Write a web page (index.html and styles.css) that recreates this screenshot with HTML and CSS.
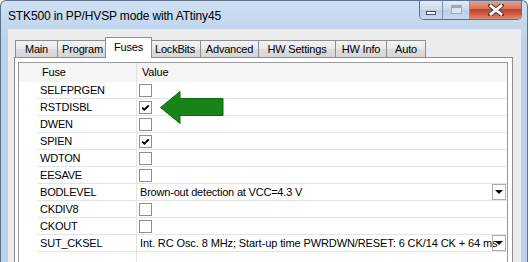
FILE: index.html
```html
<!DOCTYPE html>
<html lang="en">
<head>
  <meta charset="UTF-8">
  <meta name="viewport" content="width=device-width, initial-scale=1.0">
  <title>STK500 in PP/HVSP mode with ATtiny45</title>
  <link rel="stylesheet" href="styles.css">
</head>
<body>
  <div class="window">
    <div class="titlebar">
      <span class="title">STK500 in PP/HVSP mode with ATtiny45</span>
      <div class="caption-buttons">
        <div class="cap-btn cap-min"><span class="min-glyph"></span></div>
        <div class="cap-btn cap-max"><span class="max-glyph"></span></div>
        <div class="cap-btn cap-close">
          <svg width="16" height="12" viewBox="0 0 16 12">
            <path d="M2.5 1.5 L13.5 10.5 M13.5 1.5 L2.5 10.5" stroke="#4a3a36" stroke-width="4.6" stroke-linecap="square"/>
            <path d="M3 2 L13 10 M13 2 L3 10" stroke="#fff" stroke-width="2.8" stroke-linecap="square"/>
          </svg>
        </div>
      </div>
    </div>

    <div class="frame">
      <div class="client">
        <div class="tabs">
          <div class="tab tab-main">Main</div>
          <div class="tab tab-program">Program</div>
          <div class="tab tab-fuses selected">Fuses</div>
          <div class="tab tab-lockbits">LockBits</div>
          <div class="tab tab-advanced">Advanced</div>
          <div class="tab tab-hwsettings">HW Settings</div>
          <div class="tab tab-hwinfo">HW Info</div>
          <div class="tab tab-auto">Auto</div>
        </div>

        <div class="panel">
          <div class="grid">
            <div class="grid-header">
              <div class="rowhead"></div>
              <div class="cell name">Fuse</div>
              <div class="cell value">Value</div>
            </div>

            <div class="grid-row">
              <div class="rowhead"></div>
              <div class="cell name">SELFPRGEN</div>
              <div class="cell value"><span class="checkbox"></span></div>
            </div>
            <div class="grid-row">
              <div class="rowhead"></div>
              <div class="cell name">RSTDISBL</div>
              <div class="cell value"><span class="checkbox checked"><svg width="11" height="11" viewBox="0 0 11 11"><path d="M2.2 5.6 L4.4 7.7 L8.8 3.3" stroke="#000" stroke-width="1.9" fill="none"/></svg></span></div>
            </div>
            <div class="grid-row">
              <div class="rowhead"></div>
              <div class="cell name">DWEN</div>
              <div class="cell value"><span class="checkbox"></span></div>
            </div>
            <div class="grid-row">
              <div class="rowhead"></div>
              <div class="cell name">SPIEN</div>
              <div class="cell value"><span class="checkbox checked"><svg width="11" height="11" viewBox="0 0 11 11"><path d="M2.2 5.6 L4.4 7.7 L8.8 3.3" stroke="#000" stroke-width="1.9" fill="none"/></svg></span></div>
            </div>
            <div class="grid-row">
              <div class="rowhead"></div>
              <div class="cell name">WDTON</div>
              <div class="cell value"><span class="checkbox"></span></div>
            </div>
            <div class="grid-row">
              <div class="rowhead"></div>
              <div class="cell name">EESAVE</div>
              <div class="cell value"><span class="checkbox"></span></div>
            </div>
            <div class="grid-row">
              <div class="rowhead"></div>
              <div class="cell name">BODLEVEL</div>
              <div class="cell value combo">
                <span class="combo-text">Brown-out detection at VCC=4.3 V</span>
                <span class="combo-btn"></span>
              </div>
            </div>
            <div class="grid-row">
              <div class="rowhead"></div>
              <div class="cell name">CKDIV8</div>
              <div class="cell value"><span class="checkbox"></span></div>
            </div>
            <div class="grid-row">
              <div class="rowhead"></div>
              <div class="cell name">CKOUT</div>
              <div class="cell value"><span class="checkbox"></span></div>
            </div>
            <div class="grid-row">
              <div class="rowhead"></div>
              <div class="cell name">SUT_CKSEL</div>
              <div class="cell value combo">
                <span class="combo-text long">Int. RC Osc. 8 MHz; Start-up time PWRDWN/RESET: 6 CK/14 CK + 64 ms</span>
                <span class="combo-btn"></span>
              </div>
            </div>
            <div class="grid-row">
              <div class="rowhead"></div>
              <div class="cell name"></div>
              <div class="cell value"></div>
            </div>
          </div>

          <!-- pointer to the RSTDISBL fuse -->
          <svg class="arrow" width="64" height="34" viewBox="0 0 64 34">
            <polygon points="0.5,16.5 20,0.5 20,7.5 63,7.5 63,24.5 20,24.5 20,32.5" fill="#168416" stroke="#0d6a0d" stroke-width="1"/>
          </svg>
        </div>
      </div>
    </div>
  </div>
</body>
</html>
```

FILE: styles.css
```css
* {
  box-sizing: border-box;
}

body {
  margin: 0;
  background: #fff;
  font-family: "Liberation Sans", Arial, sans-serif;
  font-size: 11px;
  letter-spacing: -0.2px;
  color: #000;
}

/* window chrome */
.window {
  width: 528px;
  height: 262px;
  overflow: hidden;
  display: flex;
  flex-direction: column;
  background: linear-gradient(#cfe0f2, #bcd2ea 40px);
  border: 1px solid #5d738d;
  border-bottom: none;
  border-radius: 6px 6px 0 0;
}

.titlebar {
  height: 28px;
  flex: none;
  display: flex;
  justify-content: space-between;
  align-items: flex-start;
  padding-left: 7px;
  padding-right: 5px;
}

.title {
  margin-top: 8px;
  font-size: 12px;
  letter-spacing: -0.15px;
}

.caption-buttons {
  display: flex;
  margin-top: -1px;
  height: 20px;
  border: 1px solid #596f88;
  border-top: none;
  border-radius: 0 0 5px 5px;
  overflow: hidden;
}

.cap-btn {
  display: flex;
  align-items: center;
  justify-content: center;
  height: 100%;
}

.cap-min,
.cap-max {
  background: linear-gradient(#e4edf7, #cbdbeb 50%, #b6cbe2 51%, #c9dbee);
  border-right: 1px solid #7e93ab;
}

.cap-min {
  width: 23px;
}

.cap-max {
  width: 27px;
}

.min-glyph {
  width: 10px;
  height: 4px;
  margin-top: 6px;
  background: #fff;
  border: 1px solid #44546a;
}

.max-glyph {
  width: 11px;
  height: 9px;
  border: 1px solid #9aaabb;
  border-top-width: 3px;
  background: #dbe6f2;
}

.cap-close {
  width: 51px;
  background: linear-gradient(#e9a99a, #d7735b 45%, #c1432a 50%, #d2644a 80%, #e0917c);
}

/* client area */
.frame {
  flex: 1;
  display: flex;
  padding: 0 6px 0 7px;
}

.client {
  flex: 1;
  background: #ececec;
  padding: 8px 8px 0 6px;
  display: flex;
  flex-direction: column;
}

.tabs {
  display: flex;
  align-items: flex-end;
  padding-left: 1px;
}

.tab {
  height: 17px;
  padding-top: 2px;
  text-align: center;
  background: linear-gradient(#f3f3f3, #e8e8e8 50%, #dcdcdc 51%, #d6d6d6);
  border: 1px solid #8c8e94;
  border-bottom: none;
  margin-right: -1px;
}

.tab.selected {
  height: 21px;
  padding-top: 3px;
  background: #fff;
  margin: 0 -3px -1px -2px;
  position: relative;
  z-index: 1;
}

.tab-main { width: 43px; }
.tab-program { width: 51px; }
.tab-fuses { width: 47px; }
.tab-lockbits { width: 52px; }
.tab-advanced { width: 59px; }
.tab-hwsettings { width: 78px; }
.tab-hwinfo { width: 52px; }
.tab-auto { width: 40px; }

.panel {
  flex: 1;
  position: relative;
  background: #fff;
  border: 1px solid #8c8e94;
  border-bottom: none;
  padding: 4px 4px 0 3px;
}

/* fuse table */
.grid {
  border: 1px solid #9a9a9a;
  border-bottom: none;
  height: 100%;
  overflow: hidden;
}

.grid-header,
.grid-row {
  display: grid;
  grid-template-columns: 18px 100px 1fr;
}

.grid-header {
  height: 19px;
  background: #f5f5f5;
}

.grid-header .cell {
  padding-left: 5px;
  line-height: 19px;
}

.grid-header .name {
  border-right: 1px solid #e2e2e2;
}

.grid-row {
  height: 17px;
}

.grid-row .cell {
  border-bottom: 1px solid #e4e4e4;
  display: flex;
  align-items: center;
}

.grid-row .name {
  padding-left: 3px;
  border-right: 1px solid #e4e4e4;
}

.grid-row .value {
  padding-left: 2px;
}

.checkbox {
  width: 13px;
  height: 13px;
  border: 1px solid #8e8e8e;
  background: #fff;
  display: flex;
  align-items: center;
  justify-content: center;
}

.combo {
  position: relative;
  overflow: hidden;
}

.combo-text {
  padding-left: 1px;
  white-space: nowrap;
}

.combo-text.long {
  letter-spacing: -0.1px;
}

.combo-btn {
  position: absolute;
  right: 1px;
  top: 0;
  width: 14px;
  height: 16px;
  border: 1px solid #adadad;
  display: flex;
  align-items: center;
  justify-content: center;
}

.combo-btn::after {
  content: "";
  border-left: 4px solid transparent;
  border-right: 4px solid transparent;
  border-top: 4px solid #000;
}

.arrow {
  position: absolute;
  left: 145px;
  top: 33px;
}
```
